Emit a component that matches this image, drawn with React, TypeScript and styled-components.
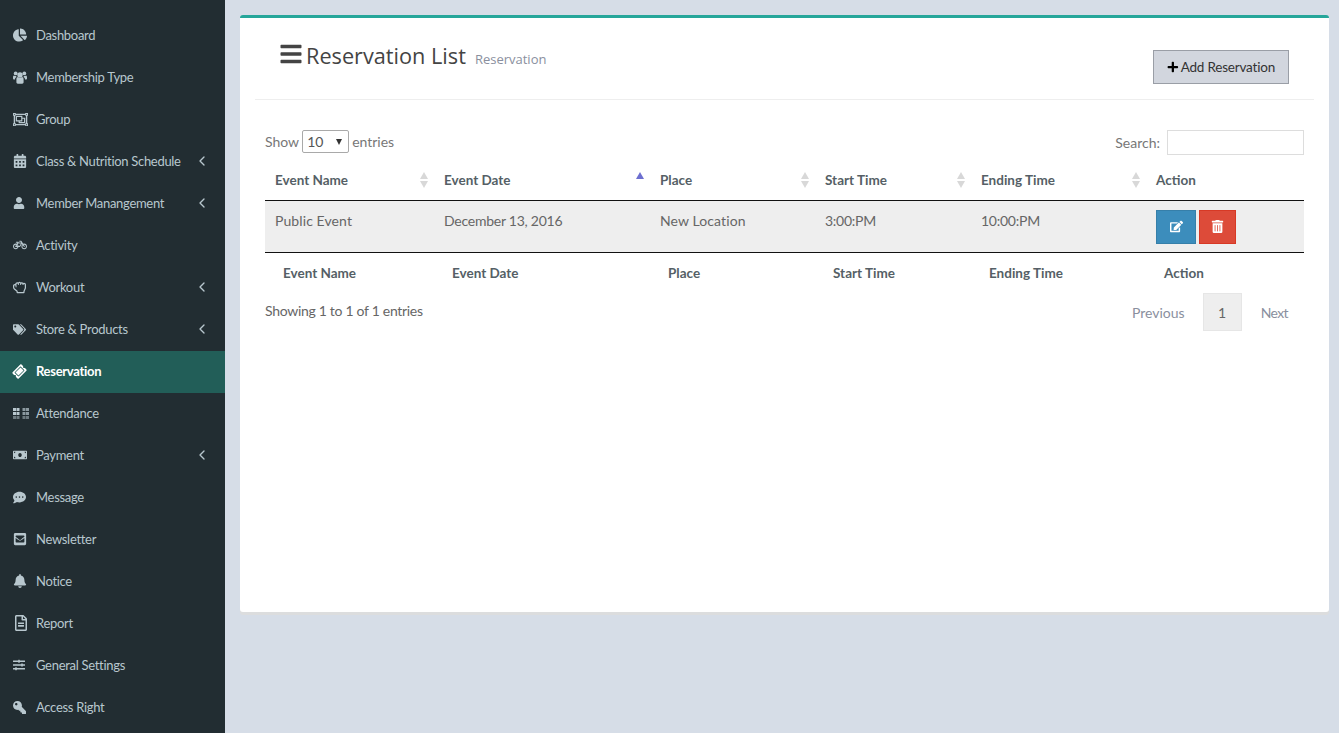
import React, { FC, ReactNode } from 'react';
import styled, { createGlobalStyle } from 'styled-components';
import { ChevronLeft } from 'lucide-react';
import {
	FaBars,
	FaBell,
	FaBicycle,
	FaCalendarAlt,
	FaChartPie,
	FaCommentDots,
	FaEdit,
	FaEnvelopeSquare,
	FaKey,
	FaMoneyBill,
	FaPlus,
	FaRegFileAlt,
	FaRegHandRock,
	FaRegObjectGroup,
	FaSlidersH,
	FaTags,
	FaTicketAlt,
	FaTrashAlt,
	FaUser,
} from 'react-icons/fa';

const UsersIcon: FC = () => (
	<svg width="14" height="13" viewBox="0 0 14 13" fill="currentColor">
		<circle cx="7" cy="4" r="2.7" />
		<circle cx="2.700" cy="2.400" r="1.900" />
		<circle cx="11.300" cy="2.400" r="1.900" />
		<path d="M3.400 8.400c0-1.500.7-2.200 1.400-2.300.6.500 1.400.8 2.200.8s1.600-.3 2.200-.8c.7.100 1.400.8 1.400 2.300v2.900c0 .9-.6 1.400-1.400 1.400H4.800c-.8 0-1.400-.5-1.400-1.400z" />
		<path d="M0 6.400c0-1.300.3-1.900 1-2 .5.500 1.100.7 1.700.7h.5c-.1.400.1.800.3 1.100-1 .3-1.500 1.200-1.600 2.400H.9C.3 8.600 0 8.200 0 7.600z" />
		<path d="M14 6.400c0-1.300-.3-1.900-1-2-.5.500-1.100.7-1.700.7h-.5c.1.400-.1.800-.3 1.100 1 .3 1.500 1.200 1.600 2.400h1c.6 0 .9-.4.900-1z" />
	</svg>
);

const AttendanceIcon: FC = () => (
	<svg width="16" height="11" viewBox="0 0 16 11" fill="currentColor">
		<path d="M0 0h3v3H0zM3.500 0h3v3h-3zM0 4h3v3H0zM3.500 4h3v3h-3z" />
		<path d="M9.500 0h3v3h-3zM13 0h3v3h-3zM9.500 4h3v3h-3zM13 4h3v3h-3z" opacity=".7" />
		<path d="M0 8h3v3H0zM3.500 8h3v3h-3zM9.500 8h3v3h-3zM13 8h3v3h-3z" opacity=".5" />
	</svg>
);

type NavEntry = { label: string; icon: ReactNode; size: number; sub?: boolean; active?: boolean };

const navEntries: NavEntry[] = [
	{ label: 'Dashboard', icon: <FaChartPie />, size: 14 },
	{ label: 'Membership Type', icon: <UsersIcon />, size: 14 },
	{ label: 'Group', icon: <FaRegObjectGroup />, size: 15 },
	{ label: 'Class & Nutrition Schedule', icon: <FaCalendarAlt />, size: 14 },
	{ label: 'Member Manangement', icon: <FaUser />, size: 12 },
	{ label: 'Activity', icon: <FaBicycle />, size: 14 },
	{ label: 'Workout', icon: <FaRegHandRock />, size: 13 },
	{ label: 'Store & Products', icon: <FaTags />, size: 13 },
	{ label: 'Reservation', icon: <FaTicketAlt />, size: 13, active: true },
	{ label: 'Attendance', icon: <AttendanceIcon />, size: 14 },
	{ label: 'Payment', icon: <FaMoneyBill />, size: 14 },
	{ label: 'Message', icon: <FaCommentDots />, size: 13 },
	{ label: 'Newsletter', icon: <FaEnvelopeSquare />, size: 14 },
	{ label: 'Notice', icon: <FaBell />, size: 14 },
	{ label: 'Report', icon: <FaRegFileAlt />, size: 16 },
	{ label: 'General Settings', icon: <FaSlidersH />, size: 12 },
	{ label: 'Access Right', icon: <FaKey />, size: 13 },
];

const hasSubmenu = ['Class & Nutrition Schedule', 'Member Manangement', 'Workout', 'Store & Products', 'Payment'];
const columns = ['Event Name', 'Event Date', 'Place', 'Start Time', 'Ending Time', 'Action'];
const columnWidths = [169, 216, 165, 156, 175, 158];

const App: FC = () => (
	<>
		<GlobalStyle />
		<Page>
			<Sidebar>
				{navEntries.map((entry) => (
					<NavItem key={entry.label} $active={entry.active}>
						<NavIcon $size={entry.size} $tilt={entry.active} $flip={entry.label === 'Access Right'}>
							{entry.icon}
						</NavIcon>
						<NavLabel>{entry.label}</NavLabel>
						{hasSubmenu.includes(entry.label) && <ChevronLeft size={16} strokeWidth={2} />}
					</NavItem>
				))}
			</Sidebar>

			<Main>
				<Card>
					<CardHeader>
						<Title>
							<FaBars />
							<TitleText>Reservation List</TitleText>
							<TitleSub>Reservation</TitleSub>
						</Title>
						<AddButton>
							<FaPlus />
							Add Reservation
						</AddButton>
					</CardHeader>

					<CardBody>
						<Controls>
							<ControlLabel $lift>
								Show
								<PageSize>
									<span>10</span>
									<i />
								</PageSize>
								entries
							</ControlLabel>
							<ControlLabel>
								Search:
								<SearchInput />
							</ControlLabel>
						</Controls>

						<Table>
							<colgroup>
								{columnWidths.map((width, i) => (
									<col key={i} width={width} />
								))}
							</colgroup>
							<thead>
								<tr>
									{columns.map((column, i) => (
										<HeadCell key={column}>
											{column}
											{i < 5 && <SortArrows $sorted={i === 1} />}
										</HeadCell>
									))}
								</tr>
							</thead>
							<tbody>
								<BodyRow>
									<BodyCell>Public Event</BodyCell>
									<BodyCell $tight>December 13, 2016</BodyCell>
									<BodyCell>New Location</BodyCell>
									<BodyCell $tight>3:00:PM</BodyCell>
									<BodyCell $tight>10:00:PM</BodyCell>
									<BodyCell>
										<ActionButton $color="#3c8dbc" $border="#367fa9">
											<FaEdit />
										</ActionButton>
										<ActionButton $color="#dd4b39" $border="#d73925">
											<FaTrashAlt />
										</ActionButton>
									</BodyCell>
								</BodyRow>
							</tbody>
							<tfoot>
								<tr>
									{columns.map((column) => (
										<FootCell key={column}>{column}</FootCell>
									))}
								</tr>
							</tfoot>
						</Table>

						<TableFooter>
							<InfoText>Showing 1 to 1 of 1 entries</InfoText>
							<Pagination>
								<PageLink>Previous</PageLink>
								<PageCurrent>1</PageCurrent>
								<PageLink>Next</PageLink>
							</Pagination>
						</TableFooter>
					</CardBody>
				</Card>
			</Main>
		</Page>
	</>
);

export default App;

const GlobalStyle = createGlobalStyle`
	html, body {
		margin: 0;
		height: 100%;
		overflow: hidden;
		background: #d6dde7;
		font-family: 'Lato', 'Noto Sans', sans-serif;
	}
`;

const Page = styled.div`
	display: flex;
	height: 733px;
`;

const Sidebar = styled.nav`
	flex: 0 0 225px;
	box-sizing: border-box;
	padding-top: 15px;
	background: #222d32;
`;

const NavItem = styled.div<{ $active?: boolean }>`
	display: flex;
	align-items: center;
	height: 42px;
	padding: 0 15px 2px 13px;
	box-sizing: border-box;
	font-size: 13px;
	letter-spacing: -0.3px;
	font-weight: ${(p) => (p.$active ? 700 : 400)};
	color: ${(p) => (p.$active ? '#ffffff' : '#b8c7ce')};
	background: ${(p) => (p.$active ? '#225e58' : 'transparent')};
`;

const NavIcon = styled.span<{ $size: number; $tilt?: boolean; $flip?: boolean }>`
	display: flex;
	align-items: center;
	flex: 0 0 23px;
	font-size: ${(p) => p.$size}px;

	svg {
		transform: ${(p) => (p.$tilt ? 'rotate(-45deg)' : p.$flip ? 'scaleX(-1)' : 'none')};
	}
`;

const NavLabel = styled.span`
	flex: 1;
`;

const Main = styled.main`
	flex: 1;
	padding: 15px 10px 0 15px;
`;

const Card = styled.section`
	box-sizing: border-box;
	height: 597px;
	padding: 0 15px;
	background: #ffffff;
	border-top: 3px solid #26a69a;
	border-radius: 3px;
	box-shadow: 0 3px 0 #dcddde;
`;

const CardHeader = styled.header`
	display: flex;
	justify-content: space-between;
	box-sizing: border-box;
	height: 82px;
	padding: 0 25px;
	border-bottom: 1px solid #eeeeee;
`;

const Title = styled.div`
	display: flex;
	align-items: baseline;
	padding-top: 23px;
	color: #444444;

	svg {
		align-self: flex-start;
		margin: 1px 0 0 -1px;
		font-size: 24px;
	}
`;

const TitleText = styled.span`
	margin-left: 3px;
	font-family: 'Open Sans', sans-serif;
	font-size: 21.7px;
`;

const TitleSub = styled.span`
	margin-left: 9px;
	font-family: 'Open Sans', sans-serif;
	font-size: 13px;
	color: #8a8f9e;
`;

const AddButton = styled.button`
	display: flex;
	align-items: center;
	gap: 2px;
	align-self: flex-start;
	box-sizing: border-box;
	width: 136px;
	height: 34px;
	margin-top: 32px;
	padding: 0 13px;
	white-space: nowrap;
	font-family: inherit;
	font-size: 13.5px;
	letter-spacing: -0.2px;
	color: #333333;
	background: #d2d6de;
	border: 1px solid #9a9ea6;

	svg {
		font-size: 12px;
		color: #000000;
	}
`;

const CardBody = styled.div`
	padding: 0 10px;
`;

const Controls = styled.div`
	display: flex;
	justify-content: space-between;
	align-items: center;
	height: 25px;
	margin-top: 30px;
`;

const ControlLabel = styled.div<{ $lift?: boolean }>`
	display: flex;
	align-items: center;
	gap: 3px;
	padding-bottom: ${(p) => (p.$lift ? '2px' : '0')};
	font-size: 14px;
	color: #777777;
`;

const PageSize = styled.div`
	display: flex;
	justify-content: space-between;
	align-items: center;
	box-sizing: border-box;
	width: 47px;
	height: 23px;
	padding: 0 6px 0 4px;
	color: #555555;
	border: 1px solid #a9a9a9;
	border-radius: 2px;

	i {
		border-top: 6px solid #333333;
		border-left: 3px solid transparent;
		border-right: 3px solid transparent;
	}
`;

const SearchInput = styled.div`
	box-sizing: border-box;
	width: 137px;
	height: 25px;
	margin-left: 4px;
	border: 1px solid #dddddd;
`;

const Table = styled.table`
	width: 1039px;
	margin-top: 5px;
	table-layout: fixed;
	border-collapse: collapse;
`;

const HeadCell = styled.th`
	position: relative;
	box-sizing: border-box;
	height: 40px;
	padding: 0 10px;
	text-align: left;
	font-size: 13.5px;
	font-weight: 700;
	color: #555f66;
	border-bottom: 1px solid #111111;
`;

const SortArrows = styled.span<{ $sorted?: boolean }>`
	position: absolute;
	right: 10px;
	top: 12px;
	width: 0;
	height: 16px;

	&::before,
	&::after {
		content: '';
		position: absolute;
		left: -4px;
		border-left: 4px solid transparent;
		border-right: 4px solid transparent;
	}

	&::before {
		top: 0;
		border-bottom: 7px solid ${(p) => (p.$sorted ? '#6d6fd0' : '#d8d8d8')};
	}

	&::after {
		bottom: 0;
		border-top: 7px solid ${(p) => (p.$sorted ? 'transparent' : '#d8d8d8')};
	}
`;

const BodyRow = styled.tr`
	background: #eeeeee;
`;

const BodyCell = styled.td<{ $tight?: boolean }>`
	box-sizing: border-box;
	height: 52px;
	padding: 8px 10px 0;
	vertical-align: top;
	font-size: 14px;
	line-height: 24px;
	letter-spacing: ${(p) => (p.$tight ? '-0.25px' : '0.1px')};
	color: #666666;
	border-bottom: 1px solid #111111;
`;

const ActionButton = styled.button<{ $color: string; $border: string }>`
	display: inline-flex;
	justify-content: center;
	align-items: center;
	box-sizing: border-box;
	width: 40px;
	height: 34px;
	margin-top: 1px;
	margin-right: 3px;
	padding: 0;
	font-size: 13px;
	color: #ffffff;
	background: ${(p) => p.$color};
	border: 1px solid ${(p) => p.$border};

	& + & {
		width: 37px;
	}
`;

const FootCell = styled.td`
	box-sizing: border-box;
	height: 41px;
	padding: 1px 18px 0;
	font-size: 13.5px;
	font-weight: 700;
	color: #555f66;
`;

const TableFooter = styled.div`
	display: flex;
	justify-content: space-between;
	align-items: flex-start;
`;

const InfoText = styled.div`
	margin-top: 9px;
	font-size: 14px;
	letter-spacing: -0.3px;
	color: #666666;
`;

const Pagination = styled.div`
	display: flex;
	align-items: center;
`;

const PageLink = styled.span`
	padding: 0 18px;
	font-size: 14px;
	color: #8a8f9e;

	&:last-child {
		padding: 0 16px 0 19px;
		letter-spacing: -0.6px;
	}
`;

const PageCurrent = styled.span`
	display: flex;
	justify-content: center;
	align-items: center;
	box-sizing: border-box;
	width: 39px;
	height: 38px;
	font-size: 14px;
	color: #666666;
	background: #eeeeee;
	border: 1px solid #e6e6e6;
`;
